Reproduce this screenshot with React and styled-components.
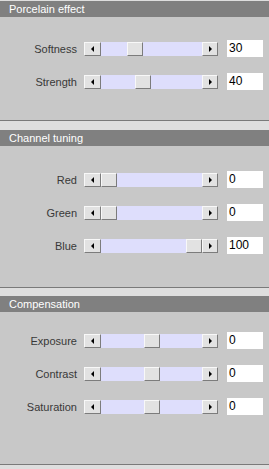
import React from 'react';
import styled, { createGlobalStyle } from 'styled-components';

const GlobalStyle = createGlobalStyle`
  html, body {
    margin: 0;
    padding: 0;
    background: #dedede;
  }
  body {
    font-family: "Liberation Sans", Arial, sans-serif;
  }
`;

const Page = styled.div`
  width: 269px;
  height: 469px;
  overflow: hidden;
  background: #dedede;
`;

const Band = styled.div`
  height: ${(p) => p.$h}px;
  background: #dedede;
`;

const Header = styled.div`
  height: 16px;
  line-height: 16px;
  background: #808080;
  color: #ffffff;
  font-size: 11px;
  padding-left: 9px;
`;

const Body = styled.div`
  height: ${(p) => p.$h}px;
  box-sizing: border-box;
  padding-top: ${(p) => p.$top}px;
  background: #c8c8c8;
  border-bottom: 1px solid #7a7a7a;
`;

const Row = styled.div`
  display: flex;
  align-items: center;
  height: 33px;
`;

const Label = styled.div`
  width: 77px;
  text-align: right;
  font-size: 11px;
  color: #383838;
  margin-right: 7px;
`;

const Track = styled.div`
  position: relative;
  display: flex;
  width: 134px;
  height: 14px;
  background: #dedefc;
`;

const Btn = styled.div`
  box-sizing: border-box;
  width: ${(p) => p.$w || 17}px;
  height: 14px;
  background: #e2e2e2;
  border-top: 1px solid #f8f8f8;
  border-left: 1px solid #f8f8f8;
  border-right: 1px solid #7c7c7c;
  border-bottom: 1px solid #7c7c7c;
  display: flex;
  align-items: center;
  justify-content: center;
`;

const Inner = styled.div`
  position: relative;
  flex: 1;
`;

const Thumb = styled(Btn)`
  position: absolute;
  top: 0;
`;

const Arrow = styled.div`
  width: 0;
  height: 0;
  border-top: 3px solid transparent;
  border-bottom: 3px solid transparent;
  ${(p) => (p.$dir === 'left' ? 'border-right: 3px solid #000;' : 'border-left: 3px solid #000;')}
`;

const Value = styled.div`
  margin-left: 9px;
  width: 36px;
  height: 17px;
  box-sizing: border-box;
  background: #ffffff;
  font-size: 12px;
  line-height: 17px;
  padding-left: 2px;
  color: #000;
`;

const Slider = ({ label, value, min = 0, max = 100 }) => {
  const pos = Math.round(((value - min) / (max - min)) * 85);
  return (
    <Row>
      <Label>{label}</Label>
      <Track>
        <Btn><Arrow $dir="left" /></Btn>
        <Inner>
          <Thumb $w={16} style={{ left: pos }} />
        </Inner>
        <Btn $w={16}><Arrow $dir="right" /></Btn>
      </Track>
      <Value>{value}</Value>
    </Row>
  );
};

const Section = ({ band, title, h, top, children }) => (
  <>
    <Band $h={band} />
    <Header>{title}</Header>
    <Body $h={h} $top={top}>{children}</Body>
  </>
);

export default function App() {
  return (
    <Page>
      <GlobalStyle />
      <Section band={1} title="Porcelain effect" h={104} top={15}>
        <Slider label="Softness" value={30} />
        <Slider label="Strength" value={40} />
      </Section>
      <Section band={9} title="Channel tuning" h={142} top={17}>
        <Slider label="Red" value={0} />
        <Slider label="Green" value={0} />
        <Slider label="Blue" value={100} />
      </Section>
      <Section band={8} title="Compensation" h={153} top={12}>
        <Slider label="Exposure" value={0} min={-100} />
        <Slider label="Contrast" value={0} min={-100} />
        <Slider label="Saturation" value={0} min={-100} />
      </Section>
    </Page>
  );
}
